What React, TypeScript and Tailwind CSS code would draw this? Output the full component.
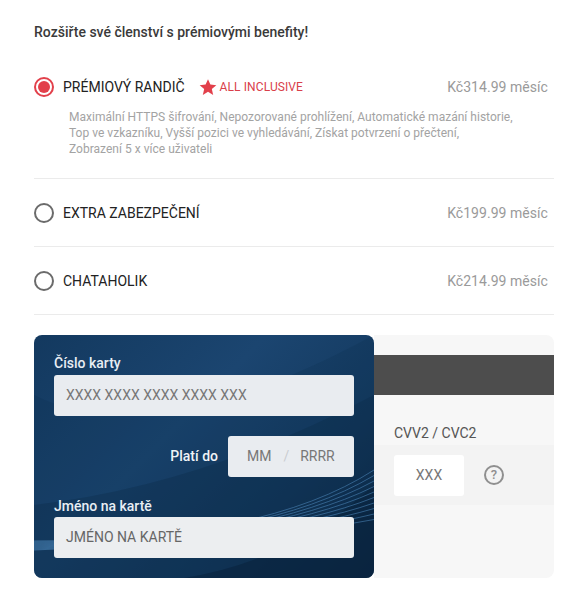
const plans = [
  {
    name: 'PRÉMIOVÝ RANDIČ',
    price: 'Kč314.99 měsíc',
    selected: true,
    benefits: [
      'Maximální HTTPS šifrování, Nepozorované prohlížení, Automatické mazání historie,',
      'Top ve vzkazníku, Vyšší pozici ve vyhledávání, Získat potvrzení o přečtení,',
      'Zobrazení 5 x více uživateli',
    ],
  },
  { name: 'EXTRA ZABEZPEČENÍ', price: 'Kč199.99 měsíc', selected: false, benefits: [] },
  { name: 'CHATAHOLIK', price: 'Kč214.99 měsíc', selected: false, benefits: [] },
]

const waveLines = Array.from({ length: 10 }, (_, i) => i)

function Radio({ selected }: { selected: boolean }) {
  if (selected) {
    return (
      <span className="flex h-5 w-5 shrink-0 items-center justify-center rounded-full border-2 border-[#e2404b]">
        <span className="h-3 w-3 rounded-full bg-[#e2404b]" />
      </span>
    )
  }
  return <span className="h-5 w-5 shrink-0 rounded-full border-2 border-[#6b6b6b]" />
}

// dark swooshes and the fine blue lines behind the card fields
function CardWave() {
  return (
    <svg className="absolute inset-0 h-full w-full" viewBox="0 0 340 243" fill="none">
      <path d="M0 60 Q120 120 340 0 L340 243 L0 243 Z" fill="#0c2c4c" fillOpacity="0.2" />
      <path d="M0 170 Q170 150 340 60 L340 243 L0 243 Z" fill="#0b2a49" fillOpacity="0.35" />
      <path d="M150 243 Q260 225 340 150 L340 243 Z" fill="#08203a" fillOpacity="0.5" />
      {waveLines.map((i) => (
        <path
          key={i}
          d={`M0 ${206 + i} Q230 ${206} 340 ${135 + i * 5.5}`}
          stroke="#5a9ad0"
          strokeOpacity="0.6"
          strokeWidth="0.8"
        />
      ))}
    </svg>
  )
}

export default function App() {
  return (
    <div className="min-h-[605px] w-[586px] bg-white pl-[34px] pr-[32px] pt-[24px] font-['Roboto',sans-serif]">
      <h1 className="text-[14px] font-medium leading-[16px] text-[#3a3a3a]">
        Rozšiřte své členství s prémiovými benefity!
      </h1>

      <div className="mt-[27px]">
        {plans.map((plan) => (
          <div
            key={plan.name}
            className={plan.selected ? 'h-[112px] border-b border-[#ebebeb] pt-[8px]' : 'h-[68px] border-b border-[#ebebeb] pt-[22px]'}
          >
            <div className="flex h-[24px] items-center">
              <Radio selected={plan.selected} />
              <span className="ml-[9px] text-[14px] text-[#222]">{plan.name}</span>
              {plan.selected && (
                <span className="ml-[14px] flex items-center text-[12px] tracking-[0.1px] text-[#d9404a]">
                  <svg className="mr-[3px] h-[18px] w-[18px]" viewBox="0 0 24 24" fill="#e2404b">
                    <path d="M12 1.5l3.2 7.3 7.9.7-6 5.2 1.8 7.8L12 18.4l-6.9 4.1 1.8-7.8-6-5.2 7.9-.7z" />
                  </svg>
                  ALL INCLUSIVE
                </span>
              )}
              <span className="ml-auto mr-[6px] text-[14px] tracking-[0.05px] text-[#9a9a9a]">{plan.price}</span>
            </div>
            {plan.benefits.length > 0 && (
              <div className="ml-[35px] mt-[10px] text-[12px] leading-[16px] tracking-[0.02px] text-[#a3a3a3]">
                {plan.benefits.map((line) => (
                  <p key={line} className="whitespace-nowrap">{line}</p>
                ))}
              </div>
            )}
          </div>
        ))}
      </div>

      <div className="mt-[20px] flex h-[243px] w-[520px]">
        <div className="relative h-full w-[340px] shrink-0 overflow-hidden rounded-[8px] bg-[linear-gradient(135deg,#13395f_0%,#1b4570_40%,#143a60_70%,#0d2743_100%)] px-[20px] pt-[20px]">
          <CardWave />
          <div className="relative">
            <label className="block h-[20px] text-[14px] font-medium leading-[17px] text-[#e8eef4]">Číslo karty</label>
            <div className="flex h-[41px] items-center rounded-[3px] bg-[#e9ecf0] pl-[12px] text-[14px] text-[#777]">
              XXXX XXXX XXXX XXXX XXX
            </div>
            <div className="mt-[20px] flex items-center justify-end">
              <span className="mr-[10px] text-[14px] font-medium text-[#f0f3f6]">Platí do</span>
              <div className="flex h-[41px] w-[126px] items-center rounded-[3px] bg-[#e9ecf0] pl-[19px] text-[14px] text-[#777]">
                <span>MM</span>
                <span className="ml-[12px] text-[#c9ccd0]">/</span>
                <span className="ml-[11px]">RRRR</span>
              </div>
            </div>
            <label className="mt-[20px] block h-[20px] text-[14px] font-medium leading-[18px] text-[#e8eef4]">Jméno na kartě</label>
            <div className="flex h-[41px] items-center rounded-[3px] bg-[#eceef0] pl-[12px] text-[14px] text-[#666]">
              JMÉNO NA KARTĚ
            </div>
          </div>
        </div>

        <div className="h-full flex-1 rounded-r-[8px] bg-[#f7f7f7] pt-[20px]">
          <div className="h-[40px] bg-[#4d4d4d]" />
          <div className="ml-[20px] mt-[30px] text-[14px] leading-[17px] text-[#555]">CVV2 / CVC2</div>
          <div className="mt-[3px] flex h-[60px] items-center bg-[#f3f3f3] pl-[20px]">
            <div className="flex h-[41px] w-[70px] items-center justify-center rounded-[3px] bg-white text-[14px] text-[#777]">
              XXX
            </div>
            <span className="ml-[20px] flex h-[20px] w-[20px] items-center justify-center rounded-full border-2 border-[#8f8f8f] text-[13px] font-medium text-[#8f8f8f]">
              ?
            </span>
          </div>
        </div>
      </div>
    </div>
  )
}
